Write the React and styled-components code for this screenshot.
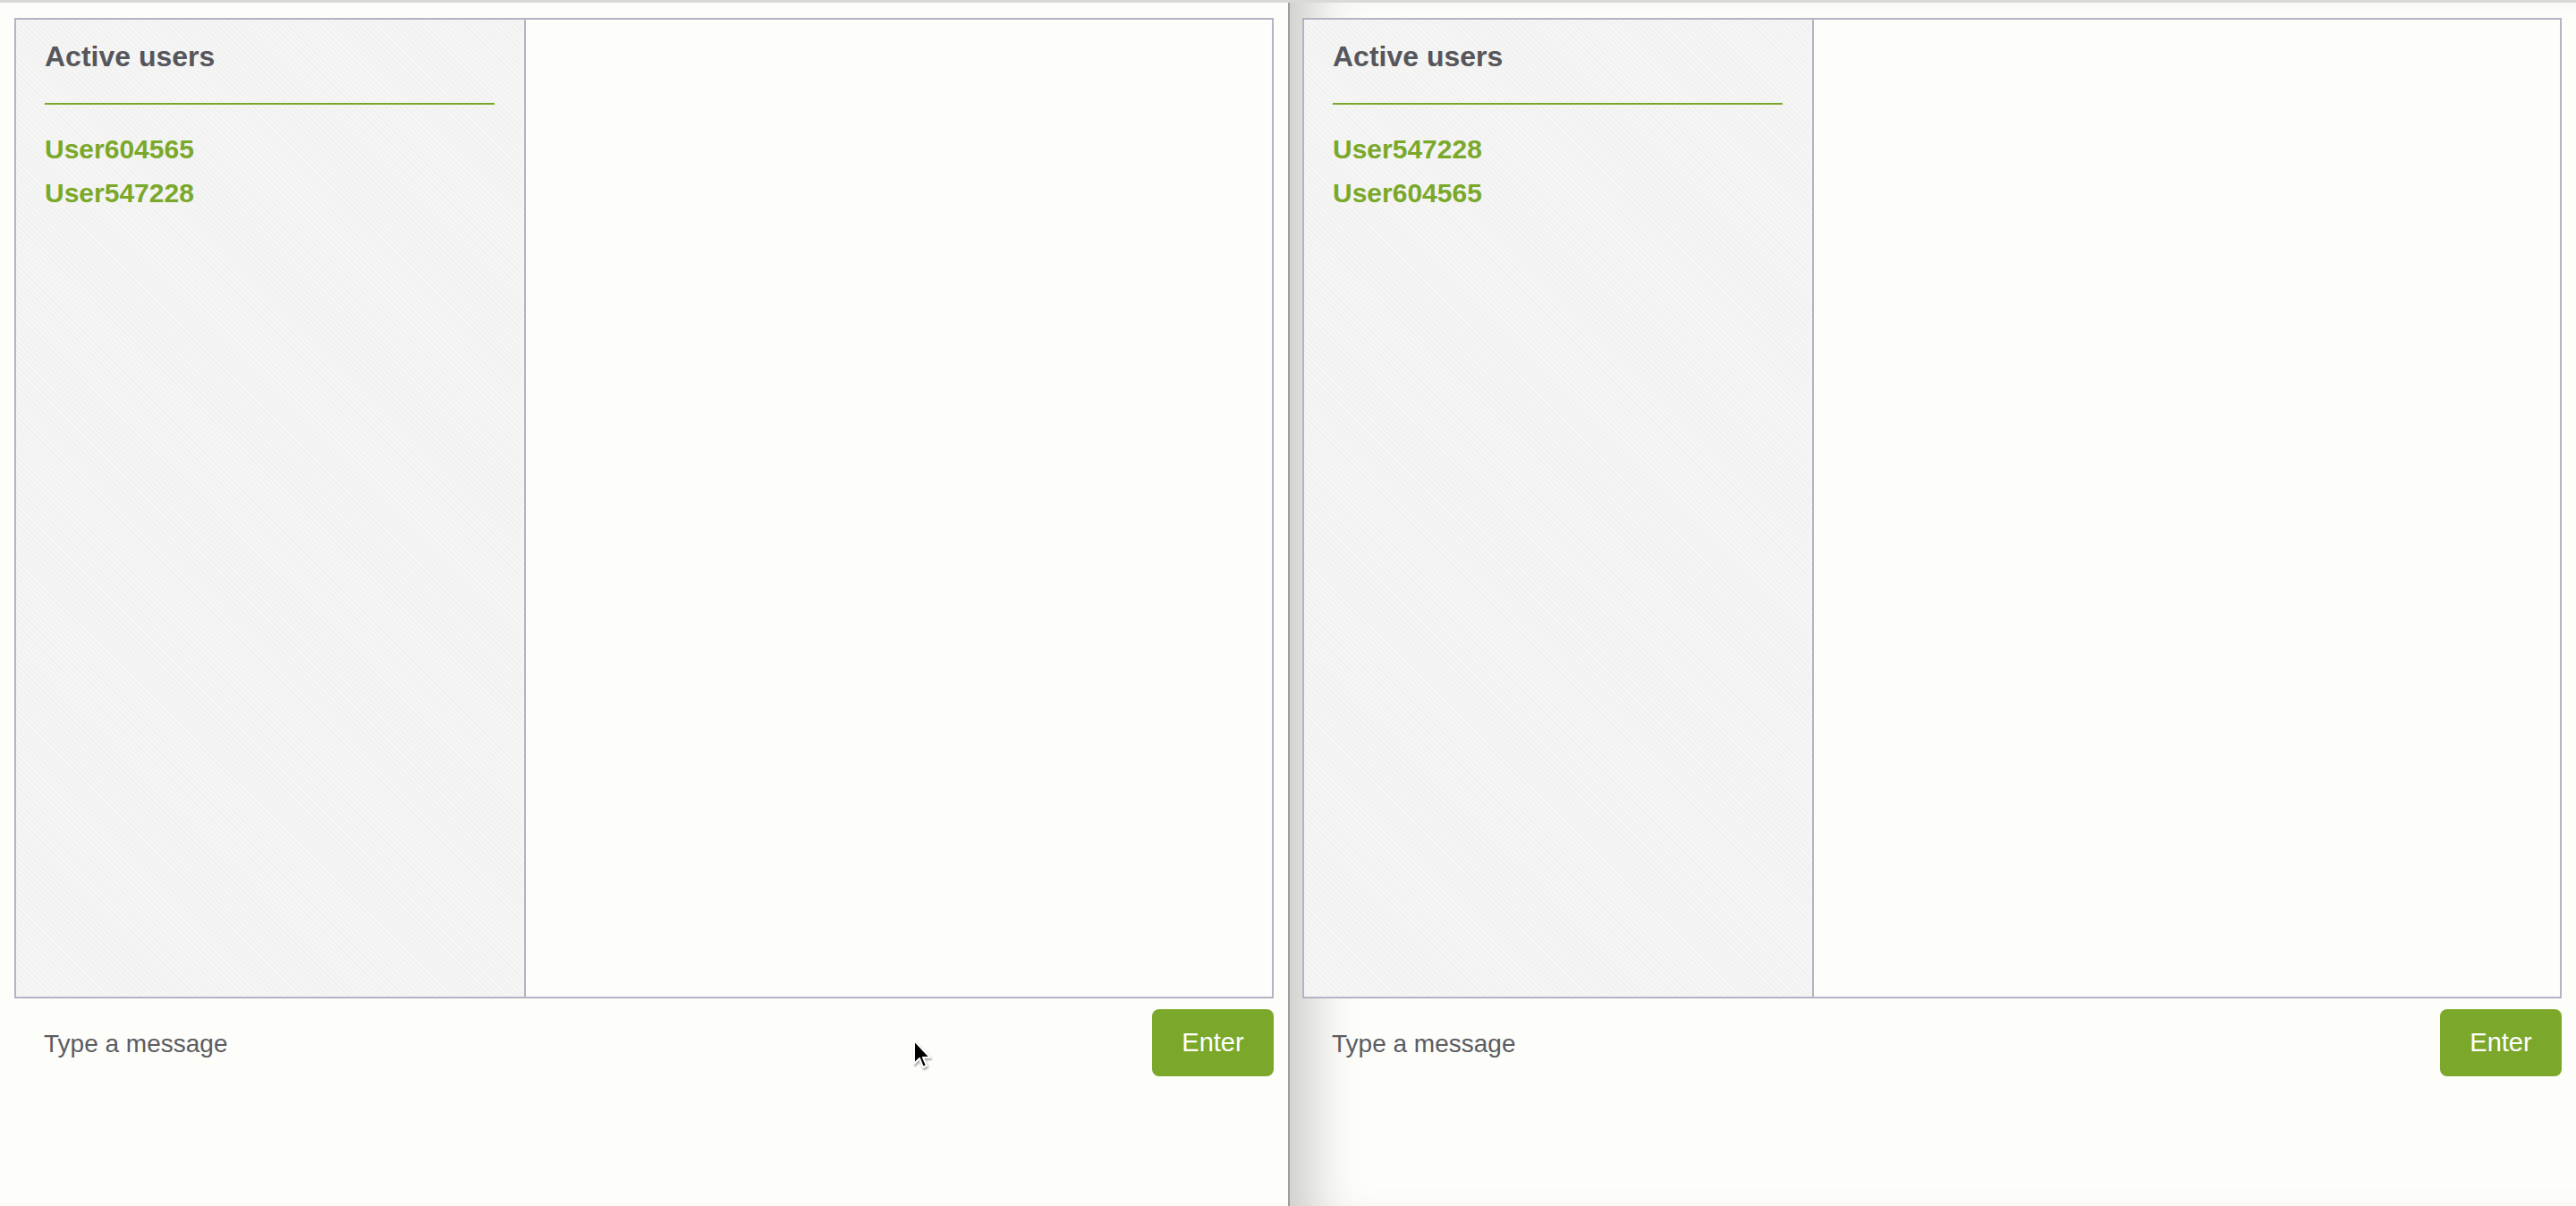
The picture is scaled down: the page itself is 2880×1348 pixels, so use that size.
import React from "react";
import styled, { createGlobalStyle, css } from "styled-components";

const GlobalStyle = createGlobalStyle`
  html, body {
    margin: 0;
    padding: 0;
    background: #fdfdf9;
    font-family: "Liberation Sans", Arial, sans-serif;
  }
`;

const Screen = styled.div`
  display: flex;
  height: 1345px;
  border-top: 3px solid #d9d9d6;
  overflow: hidden;
`;

const Window = styled.div`
  position: relative;
  flex: 0 0 1440px;
  box-sizing: border-box;
  display: flex;
  flex-direction: column;
  padding: 17px 16px 0 16px;

  ${(p) =>
    p.$shadowed &&
    css`
      border-left: 2px solid #9c9c9c;
      padding-left: 14px;
      box-shadow: inset 60px 0 60px -40px rgba(0, 0, 0, 0.22);
    `}
`;

const Panel = styled.div`
  display: flex;
  height: 1096px;
  box-sizing: border-box;
  border: 2px solid #b3b4c3;
  background: #fdfdfb;
`;

const Sidebar = styled.aside`
  flex: 0 0 570px;
  box-sizing: border-box;
  border-right: 2px solid #b3b4c3;
  padding: 23px 33px 0 32px;
  background: repeating-linear-gradient(
    45deg,
    #f6f6f5 0 2px,
    #f1f1f1 2px 4px
  );
`;

const Heading = styled.h3`
  margin: 0 0 33px;
  font-size: 32px;
  font-weight: 700;
  color: #56565b;
`;

const Rule = styled.hr`
  margin: 0 0 25px;
  border: 0;
  height: 2px;
  background: #7ba82b;
`;

const UserName = styled.div`
  font-size: 30px;
  font-weight: 700;
  line-height: 49px;
  color: #7aa82a;
`;

const Messages = styled.main`
  flex: 1;
`;

const Composer = styled.form`
  display: flex;
  align-items: center;
  margin-top: 12px;
  height: 75px;
`;

const MessageInput = styled.input`
  flex: 1;
  height: 75px;
  box-sizing: border-box;
  padding: 3px 0 0 33px;
  border: 0;
  background: transparent;
  font-family: "Liberation Sans", Arial, sans-serif;
  font-size: 28px;
  color: #333;
  outline: none;

  &::placeholder {
    color: #5c5c62;
  }
`;

const EnterButton = styled.button`
  width: 136px;
  height: 75px;
  border: 0;
  border-radius: 8px;
  background: #7ba82b;
  color: #fff;
  font-family: "Liberation Sans", Arial, sans-serif;
  font-size: 29px;
  cursor: pointer;
`;

const Pointer = styled.svg`
  position: absolute;
  left: 1019px;
  top: 1158px;
  filter: drop-shadow(1px 2px 1px rgba(0, 0, 0, 0.35));
`;

function ChatWindow({ users, shadowed, showCursor }) {
  return (
    <Window $shadowed={shadowed}>
      <Panel>
        <Sidebar>
          <Heading>Active users</Heading>
          <Rule />
          {users.map((u) => (
            <UserName key={u}>{u}</UserName>
          ))}
        </Sidebar>
        <Messages />
      </Panel>
      <Composer onSubmit={(e) => e.preventDefault()}>
        <MessageInput placeholder="Type a message" />
        <EnterButton type="submit">Enter</EnterButton>
      </Composer>
      {showCursor && (
        <Pointer width="24" height="36" viewBox="0 0 24 36">
          <path
            d="M3 2 L3 28 L9 22 L13 32 L17 30 L13 21 L21 21 Z"
            fill="#000"
            stroke="#fff"
            strokeWidth="2"
            strokeLinejoin="round"
          />
        </Pointer>
      )}
    </Window>
  );
}

export default function App() {
  return (
    <>
      <GlobalStyle />
      <Screen>
        <ChatWindow users={["User604565", "User547228"]} showCursor />
        <ChatWindow users={["User547228", "User604565"]} shadowed />
      </Screen>
    </>
  );
}
